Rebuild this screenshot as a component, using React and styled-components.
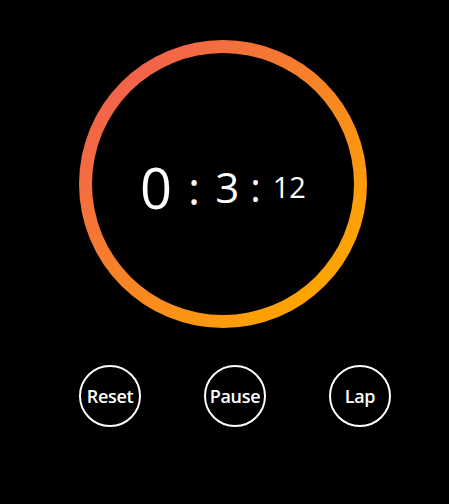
import React from 'react'
import styled, { createGlobalStyle } from 'styled-components'

const GlobalStyle = createGlobalStyle`
  html, body {
    margin: 0;
    padding: 0;
    background: #000;
  }
  body {
    font-family: "Open Sans", "Noto Sans", sans-serif;
    color: #fff;
  }
`

const Page = styled.div`
  width: 449px;
  height: 504px;
  background: #000;
  padding: 40px 0 0 79px;
  box-sizing: border-box;
`

const Ring = styled.div`
  width: 288px;
  height: 288px;
  border-radius: 50%;
  padding: 13px;
  box-sizing: border-box;
  background: linear-gradient(135deg, #f05a55 5%, #ffa500 85%);
`

const Face = styled.div`
  width: 100%;
  height: 100%;
  border-radius: 50%;
  background: #000;
  display: flex;
  align-items: center;
  justify-content: center;
`

const Readout = styled.div`
  display: flex;
  align-items: center;
  margin-top: 5px;
`

const Digit = styled.span`
  font-size: ${p => p.size}px;
  line-height: 1;
  font-weight: 400;
`

const Colon = styled.span`
  font-size: ${p => p.size}px;
  line-height: 1;
  margin: 0 ${p => p.right}px 0 ${p => p.left}px;
`

const Controls = styled.div`
  display: flex;
  gap: 63px;
  margin-top: 37px;
`

const RoundButton = styled.button`
  width: 62px;
  height: 62px;
  border-radius: 50%;
  border: 2px solid #fff;
  background: transparent;
  color: #fff;
  font-family: "Open Sans", "Noto Sans", sans-serif;
  font-size: 18px;
  font-weight: 600;
  letter-spacing: -0.3px;
  padding: 0;
  display: flex;
  align-items: center;
  justify-content: center;
  white-space: nowrap;
  overflow: visible;
  cursor: pointer;
`

export default function App() {
  const time = { min: 0, sec: 3, ms: 12 }
  return (
    <>
      <GlobalStyle />
      <Page>
        <Ring>
          <Face>
            <Readout>
              <Digit size={56}>{time.min}</Digit>
              <Colon size={46} left={16} right={15}>:</Colon>
              <Digit size={42}>{time.sec}</Digit>
              <Colon size={40} left={11} right={12}>:</Colon>
              <Digit size={29}>{time.ms}</Digit>
            </Readout>
          </Face>
        </Ring>
        <Controls>
          <RoundButton>Reset</RoundButton>
          <RoundButton>Pause</RoundButton>
          <RoundButton>Lap</RoundButton>
        </Controls>
      </Page>
    </>
  )
}
